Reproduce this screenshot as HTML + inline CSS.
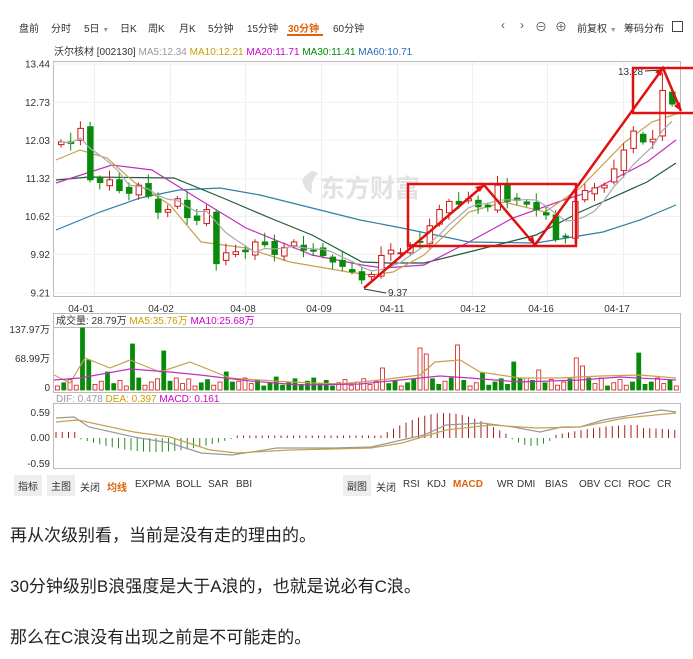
<!DOCTYPE html>
<html><head><meta charset="utf-8"><style>
body{margin:0;width:693px;height:659px;background:#fff;overflow:hidden;font-family:"Liberation Sans","Noto Sans CJK SC",sans-serif;position:relative}
.t{position:absolute;white-space:nowrap}
.nav{font-size:10px;color:#333;top:20px}
.tb{font-size:10px;color:#333;top:479px}
.box{background:#eee;padding:3px 4px;top:475px}
.p{position:absolute;left:10px;font-size:17px;line-height:24px;color:#222;white-space:nowrap}
svg{position:absolute;left:0;top:0}
</style></head><body>
<div class="t nav" style="left:19px">盘前</div>
<div class="t nav" style="left:51px">分时</div>
<div class="t nav" style="left:84px">5日 <span style="font-size:7px;color:#999">▼</span></div>
<div class="t nav" style="left:120px">日K</div>
<div class="t nav" style="left:148px">周K</div>
<div class="t nav" style="left:179px">月K</div>
<div class="t nav" style="left:208px">5分钟</div>
<div class="t nav" style="left:247px">15分钟</div>
<div class="t nav" style="left:288px;color:#e0630b;font-weight:bold">30分钟</div>
<div style="position:absolute;left:287px;top:34px;width:36px;height:2px;background:#e0630b"></div>
<div class="t nav" style="left:333px">60分钟</div>
<div class="t nav" style="left:501px;font-size:12px;top:18px;color:#555">‹</div>
<div class="t nav" style="left:520px;font-size:12px;top:18px;color:#555">›</div>
<div class="t nav" style="left:535px;font-size:12px;top:18px;color:#555">⊖</div>
<div class="t nav" style="left:555px;font-size:12px;top:18px;color:#555">⊕</div>
<div class="t nav" style="left:577px">前复权 <span style="font-size:7px;color:#999">▼</span></div>
<div class="t nav" style="left:624px">筹码分布</div>
<div style="position:absolute;left:672px;top:21px;width:9px;height:9px;border:1px solid #444"></div>
<div class="t" style="left:54px;top:43px;font-size:10px;color:#333">沃尔核材 [002130] <span style="color:#999">MA5:12.34</span> <span style="color:#c8a000">MA10:12.21</span> <span style="color:#c0c">MA20:11.71</span> <span style="color:#080">MA30:11.41</span> <span style="color:#2a6cb0">MA60:10.71</span></div>

<svg width="693" height="659" id="s" font-family="Liberation Sans, Noto Sans CJK SC, sans-serif"></svg>

<div class="t tb box" style="left:14px">指标</div>
<div class="t tb box" style="left:47px">主图</div>
<div class="t tb" style="left:80px">关闭</div>
<div class="t tb" style="left:107px;color:#e0630b;font-weight:bold">均线</div>
<div class="t tb" style="left:135px">EXPMA</div>
<div class="t tb" style="left:176px">BOLL</div>
<div class="t tb" style="left:208px">SAR</div>
<div class="t tb" style="left:236px">BBI</div>
<div class="t tb box" style="left:343px">副图</div>
<div class="t tb" style="left:376px">关闭</div>
<div class="t tb" style="left:403px">RSI</div>
<div class="t tb" style="left:427px">KDJ</div>
<div class="t tb" style="left:453px;color:#e0630b;font-weight:bold">MACD</div>
<div class="t tb" style="left:497px">WR</div>
<div class="t tb" style="left:517px">DMI</div>
<div class="t tb" style="left:545px">BIAS</div>
<div class="t tb" style="left:579px">OBV</div>
<div class="t tb" style="left:604px">CCI</div>
<div class="t tb" style="left:628px">ROC</div>
<div class="t tb" style="left:657px">CR</div>

<div class="p" style="top:524px">再从次级别看，当前是没有走的理由的。</div>
<div class="p" style="top:575px">30分钟级别B浪强度是大于A浪的，也就是说必有C浪。</div>
<div class="p" style="top:626px">那么在C浪没有出现之前是不可能走的。</div>

<script>
var s=document.getElementById('s'),o='';
function Y(p){return 64+(13.44-p)*54.1}
o+='<rect x="53.5" y="61.5" width="627" height="235" fill="none" stroke="#bbb"/>';
o+='<rect x="53.5" y="313.5" width="627" height="79" fill="none" stroke="#bbb"/><line x1="53" y1="327.5" x2="680" y2="327.5" stroke="#bbb"/>';
o+='<rect x="53.5" y="403.5" width="627" height="65" fill="none" stroke="#bbb"/>';
var gx=[94,170,245,321,397,472,547,623];
gx.forEach(function(x){o+='<line x1="'+x+'.5" y1="62" x2="'+x+'.5" y2="296" stroke="#eee"/>';});
var pl=[[13.44,'13.44'],[12.73,'12.73'],[12.03,'12.03'],[11.32,'11.32'],[10.62,'10.62'],[9.92,'9.92'],[9.21,'9.21']];
pl.forEach(function(a){var y=Y(a[0]);o+='<line x1="53" y1="'+y+'" x2="680" y2="'+y+'" stroke="#f0f0f0"/><text x="50" y="'+(y+3.5)+'" font-size="10" text-anchor="end" fill="#333">'+a[1]+'</text>';});
var dl=[[81,'04-01'],[161,'04-02'],[243,'04-08'],[319,'04-09'],[392,'04-11'],[473,'04-12'],[541,'04-16'],[617,'04-17']];
dl.forEach(function(a){o+='<text x="'+a[0]+'" y="312" font-size="10" text-anchor="middle" fill="#333">'+a[1]+'</text>';});
o+='<text x="320" y="197" font-size="25" fill="#e2e2e2" font-weight="bold">东方财富</text><path d="M302 180 q10 -14 16 -6 q-8 6 -6 20 q-8 -4 -10 -14z" fill="#e2e2e2"/>';
function pline(pts,c){o+='<polyline points="'+pts+'" fill="none" stroke="'+c+'" stroke-width="1.2"/>';}
pline('56,230 100,212 140,198 179,190 220,188 260,195 312,208 360,220 402,228 469,242 536,243 603,232 640,220 676,205','#2f7fa8');
pline('56,180 89,177 174,178 223,198 270,218 312,235 362,262 388,263 424,263 469,252 536,235 580,212 647,182 676,163','#1f5a3a');
pline('56,183 112,165 152,170 192,195 246,228 312,255 362,265 384,268 424,265 469,242 513,218 558,202 589,192 647,162 676,140','#c030c0');
pline('56,160 80,150 107,158 134,182 170,205 201,242 246,248 290,262 348,272 371,275 393,272 424,255 469,212 504,202 545,212 580,188 625,142 652,122 679,113','#c8a050');
var c=[12.0,11.97,12.25,11.3,11.25,11.3,11.1,11.05, 11.2,11.0,10.7,10.75,10.95,10.6,10.55,10.75, 9.75,9.95,9.97,9.97,10.15,10.1,9.92,10.05, 10.15,10.0,9.98,9.9,9.78,9.7,9.6,9.45, 9.55,9.9,10.0,9.95,10.1,10.15,10.45,10.75, 10.9,10.85,10.95,10.8,10.8,11.2,10.9,10.92, 10.85,10.75,10.65,10.2,10.25,10.9,11.1,11.15, 11.2,11.5,11.85,12.2,12.0,12.05,12.95,12.7];
var ma5=[];
for(var i=0;i<c.length;i++){var op=i==0?11.95:c[i-1]+((i*7)%5-2)*0.03;if(i==16)op=10.7;if(i==3)op=12.28;var x=58+i*9.7;var up=c[i]>=op;var hi=Math.max(op,c[i])+0.05+((i*3)%4)*0.04,lo=Math.min(op,c[i])-0.05-((i*5)%3)*0.04;
if(i==31)lo=9.37;if(i==62)hi=13.28;
var col=up?'#d01818':'#0a8a0a';var t=Y(Math.max(op,c[i])),b=Y(Math.min(op,c[i]));if(b-t<1)b=t+1;
o+='<line x1="'+(x+3)+'" y1="'+Y(hi)+'" x2="'+(x+3)+'" y2="'+Y(lo)+'" stroke="'+col+'"/>';
o+='<rect x="'+(x+0.5)+'" y="'+t+'" width="5.5" height="'+(b-t)+'" fill="'+(up?'#fff':col)+'" stroke="'+col+'"/>';
var sum=0,n=0;for(var k=Math.max(0,i-4);k<=i;k++){sum+=c[k];n++;}ma5.push((x+3)+','+Y(sum/n));}
pline(ma5.join(' '),'#aaa');
o+='<text x="388" y="296" font-size="10" fill="#333">9.37</text><line x1="364" y1="289" x2="386" y2="293" stroke="#333"/>';
o+='<text x="618" y="75" font-size="10" fill="#333">13.28</text><line x1="645" y1="71" x2="663" y2="70" stroke="#333"/>';
o+='<g stroke="#e01010" stroke-width="2.5" fill="none"><rect x="408" y="184" width="168" height="62"/><rect x="633" y="68" width="62" height="45"/><polyline points="364,288 484,185 535,245 663,68 681,111"/></g>';
o+='<path d="M484 185 l-9 2 l5 5z M663 68 l-8 4 l6 4z M681 111 l-1 -9 l-6 4z M535 245 l-2 -9 l-5 4z" fill="#e01010"/>';
o+='<text x="56" y="324" font-size="10" fill="#333">成交量: 28.79万 <tspan fill="#c8a000">MA5:35.76万</tspan> <tspan fill="#c0c">MA10:25.68万</tspan></text>';
o+='<text x="50" y="333" font-size="10" text-anchor="end" fill="#333">137.97万</text><text x="50" y="362" font-size="10" text-anchor="end" fill="#333">68.99万</text><text x="50" y="391" font-size="10" text-anchor="end" fill="#333">0</text>';
var nv=100,vb=[];for(var i=0;i<nv;i++){vb.push(4+((i*37)%11)*0.8);}
var spk={4:62,5:30,8:18,12:46,13:12,17:39,21:11,27:18,28:8,35:13,52:22,58:42,59:36,64:45,68:17,73:28,75:12,77:20,83:32,84:24,87:12,93:37,95:8};
for(var k in spk)vb[k]=spk[k];
var redset={0:1,2:1,3:1,6:1,7:1,10:1,11:1,14:1,15:1,16:1,19:1,20:1,21:1,22:1,25:1,26:1,29:1,30:1,31:1,45:1,46:1,47:1,48:1,49:1,50:1,51:1,52:1,55:1,58:1,59:1,62:1,64:1,66:1,67:1,75:1,77:1,79:1,80:1,81:1,83:1,84:1,86:1,87:1,89:1,90:1,91:1,96:1,97:1,99:1};
for(var i=0;i<nv;i++){var x=55+i*6.25,h=vb[i],r=redset[i];var col=r?'#d01818':'#0a8a0a';
o+='<rect x="'+(x+0.5)+'" y="'+(390-h)+'" width="4" height="'+h+'" fill="'+(r?'#fff':col)+'" stroke="'+col+'" stroke-width="0.8"/>';}
pline('54,375 70,383 85,358 110,368 130,360 160,372 190,362 230,378 290,382 340,384 380,380 420,375 435,362 460,360 480,372 520,378 560,378 600,376 640,375 676,378','#c8a050');
pline('54,380 80,378 130,369 170,372 200,375 250,381 300,385 360,384 400,380 440,376 470,378 520,382 580,380 620,377 676,380','#c030c0');
o+='<text x="56" y="402" font-size="10" fill="#999">DIF: 0.478 <tspan fill="#c8a000">DEA: 0.397</tspan> <tspan fill="#c0c">MACD: 0.161</tspan></text>';
o+='<text x="50" y="416" font-size="10" text-anchor="end" fill="#333">0.59</text><text x="50" y="441" font-size="10" text-anchor="end" fill="#333">0.00</text><text x="50" y="467" font-size="10" text-anchor="end" fill="#333">-0.59</text>';
for(var i=0;i<100;i++){var x=56+i*6.25,h;
if(x<76)h=6;else if(x<235)h=-14*Math.sin((x-76)/159*Math.PI);else if(x<380)h=2.5;else if(x<510)h=23*Math.sin((x-380)/130*Math.PI)+2;else if(x<555)h=-8*Math.sin((x-510)/45*Math.PI);else h=3+10*Math.sin((x-555)/130*Math.PI*0.8)*(x<640?1:0.7);
if(Math.abs(h)<1)h=h<0?-1:1;var col=h>0?'#a02020':'#2a8a2a';
o+='<line x1="'+x+'" y1="438" x2="'+x+'" y2="'+(438-h)+'" stroke="'+col+'"/>';}
pline('56,418 74,417 89,427 134,437 170,443 201,453 232,455 277,448 335,448 371,447 393,442 424,435 446,425 482,423 513,427 540,432 562,427 580,427 603,420 661,410 676,412','#999');
pline('56,422 78,420 134,432 170,437 210,450 237,453 290,450 371,448 402,443 446,430 491,425 536,428 580,427 625,418 676,413','#c8a050');
s.innerHTML=o;
</script>
</body></html>
